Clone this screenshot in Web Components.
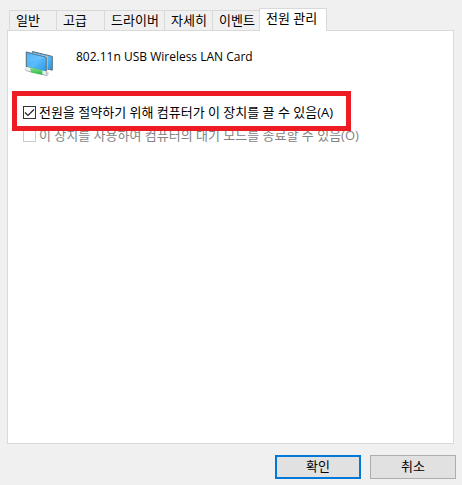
<!DOCTYPE html>
<html lang="ko">
<head>
<meta charset="utf-8">
<meta name="viewport" content="width=device-width, initial-scale=1">
<title>802.11n USB Wireless LAN Card</title>
<style>
body {
	margin: 0;
	background: #f0f0f0;
	color: #000;
	font: 13px/16px "Open Sans", "Noto Sans CJK KR", sans-serif;
}
</style>
</head>
<body>
<property-sheet>
	<sheet-tab slot="tabs" style="flex-basis: 47px">일반</sheet-tab>
	<sheet-tab slot="tabs" style="flex-basis: 48px">고급</sheet-tab>
	<sheet-tab slot="tabs" style="flex-basis: 60px">드라이버</sheet-tab>
	<sheet-tab slot="tabs" style="flex-basis: 48px">자세히</sheet-tab>
	<sheet-tab slot="tabs" style="flex-basis: 47px">이벤트</sheet-tab>
	<sheet-tab slot="tabs" style="flex-basis: 68px" selected>전원 관리</sheet-tab>
	<device-header>802.11n USB Wireless LAN Card</device-header>
	<check-option checked highlight>전원을 절약하기 위해 컴퓨터가 이 장치를 끌 수 있음(A)</check-option>
	<check-option disabled>이 장치를 사용하여 컴퓨터의 대기 모드를 종료할 수 있음(O)</check-option>
	<dialog-button slot="actions" primary>확인</dialog-button>
	<dialog-button slot="actions">취소</dialog-button>
</property-sheet>

<script>
class PropertySheet extends HTMLElement {
	constructor() {
		super()
		this.attachShadow({ mode: 'open' })
		this.shadowRoot.innerHTML = `
		<style>
		:host {
			display: flex;
			flex-direction: column;
			box-sizing: border-box;
			min-height: 100vh;
			padding: 8px 8px 6px 7px;
		}
		.tabs {
			display: flex;
			align-items: flex-end;
			padding-left: 2px;
		}
		.page {
			flex: 1;
			display: flex;
			flex-direction: column;
			border: 1px solid #d9d9d9;
			background: #fff;
			padding: 16px 15px;
		}
		.actions {
			display: flex;
			justify-content: flex-end;
			gap: 9px;
			margin-right: -2px;
			padding-top: 11px;
		}
		</style>
		<div class="tabs" role="tablist"><slot name="tabs"></slot></div>
		<main class="page"><slot></slot></main>
		<footer class="actions"><slot name="actions"></slot></footer>
		`
		this.shadowRoot.addEventListener('click', event => {
			const tab = event.target.closest('sheet-tab')
			if(!tab) {
				return
			}
			for(const item of this.querySelectorAll('sheet-tab')) {
				item.toggleAttribute('selected', item === tab)
			}
		})
	}
}

class SheetTab extends HTMLElement {
	static get observedAttributes() { return [ 'selected' ] }
	constructor() {
		super()
		this.attachShadow({ mode: 'open' })
		this.shadowRoot.innerHTML = `
		<style>
		:host {
			display: block;
			flex: 0 1 auto;
			min-width: 0;
		}
		button {
			display: block;
			box-sizing: border-box;
			width: 100%;
			height: 20px;
			padding: 0 0 2px 6px;
			border: solid #d9d9d9;
			border-width: 1px 0 0 1px;
			background: #f0f0f0;
			color: inherit;
			font: inherit;
			text-align: left;
			white-space: nowrap;
		}
		:host([selected]) button {
			position: relative;
			height: 23px;
			margin-bottom: -1px;
			padding-bottom: 4px;
			border-width: 1px 1px 0;
			background: #fff;
		}
		</style>
		<button type="button" role="tab"><slot></slot></button>
		`
	}
	connectedCallback() {
		this._refresh()
	}
	attributeChangedCallback() {
		this._refresh()
	}
	_refresh() {
		this.shadowRoot.querySelector('button').setAttribute('aria-selected', this.hasAttribute('selected'))
	}
}

class DeviceHeader extends HTMLElement {
	constructor() {
		super()
		this.attachShadow({ mode: 'open' })
		this.shadowRoot.innerHTML = `
		<style>
		:host {
			display: flex;
			align-items: flex-start;
			gap: 21px;
			margin-bottom: 25px;
			font-size: 12px;
			line-height: 20px;
		}
		svg {
			flex: none;
		}
		</style>
		<svg width="32" height="32" viewBox="0 0 32 32" aria-hidden="true">
			<defs>
				<linearGradient id="screen" x1="0" y1="0" x2="1" y2="1">
					<stop offset="0" stop-color="#36a4f2"/>
					<stop offset=".5" stop-color="#5bbcfb"/>
					<stop offset="1" stop-color="#2496ea"/>
				</linearGradient>
				<linearGradient id="plug" x1="0" y1="0" x2="0" y2="1">
					<stop offset="0" stop-color="#86e68a"/>
					<stop offset="1" stop-color="#27b445"/>
				</linearGradient>
			</defs>
			<path d="M9.4 4.5 29.3 9.4v13.8L9.4 18.5z" fill="url(#screen)" stroke="#5b707c"/>
			<path d="M2.5 4 24.4 9.5v16.4L2.5 20.5z" fill="#dfe7ec"/>
			<path d="M3.3 5 23.3 10.2v14.6L3.3 19.8z" fill="url(#screen)" stroke="#5b707c"/>
			<path d="M4.2 6.2 22.4 11 4.2 15.5z" fill="#8fd2ff" opacity=".3"/>
			<path d="m4.5 22.2 4 1.1M20 25.8l3.3.9" stroke="#a9b0b4" stroke-width="4.4" stroke-linecap="round"/>
			<path d="m4.5 21.8 4 1.1M20 25.3l3.3.9" stroke="#eef0f1" stroke-width="3.4" stroke-linecap="round"/>
			<path d="M7.5 20.4 19.4 23.2v4.8L9 25.8q-2-.6-1.5-5.4z" fill="url(#plug)"/>
			<circle cx="23.6" cy="26.2" r="1.1" fill="#b9c0c3"/>
		</svg>
		<slot></slot>
		`
	}
}

class CheckOption extends HTMLElement {
	constructor() {
		super()
		this.attachShadow({ mode: 'open' })
		this.shadowRoot.innerHTML = `
		<style>
		:host {
			display: block;
			position: relative;
			width: fit-content;
			margin-bottom: 7px;
		}
		:host([disabled]) {
			color: #838383;
		}
		/* Red marker frame, lies over the neighbouring rows */
		:host([highlight])::after {
			content: '';
			position: absolute;
			z-index: 1;
			inset: -13px -18px -11px -11px;
			border: 5px solid #ed1c24;
			pointer-events: none;
		}
		label {
			display: flex;
			align-items: center;
			gap: 3px;
		}
		input {
			flex: none;
			appearance: none;
			box-sizing: border-box;
			width: 13px;
			height: 13px;
			margin: 0;
			border: 1px solid #333;
			background: #fff;
		}
		input:checked {
			background: #fff url("data:image/svg+xml,%3Csvg xmlns='http://www.w3.org/2000/svg' viewBox='0 0 11 11'%3E%3Cpath d='M1 5.5 4 8.5 10 2.5' fill='none' stroke='%23222' stroke-width='1.2'/%3E%3C/svg%3E");
		}
		input:disabled {
			border-color: #ccc;
		}
		</style>
		<label for="box"><input type="checkbox" id="box"><span><slot></slot></span></label>
		`
	}
	connectedCallback() {
		const box = this.shadowRoot.getElementById('box')
		box.checked = this.hasAttribute('checked')
		box.disabled = this.hasAttribute('disabled')
	}
}

class DialogButton extends HTMLElement {
	constructor() {
		super()
		this.attachShadow({ mode: 'open' })
		this.shadowRoot.innerHTML = `
		<style>
		:host {
			display: block;
		}
		button {
			display: block;
			box-sizing: border-box;
			width: 86px;
			height: 24px;
			padding: 0 0 2px;
			border: 1px solid #adadad;
			background: #e1e1e1;
			color: inherit;
			font: inherit;
		}
		:host([primary]) button {
			border: 2px solid #0078d7;
		}
		</style>
		<button type="button"><slot></slot></button>
		`
	}
}

customElements.define('property-sheet', PropertySheet)
customElements.define('sheet-tab', SheetTab)
customElements.define('device-header', DeviceHeader)
customElements.define('check-option', CheckOption)
customElements.define('dialog-button', DialogButton)
</script>
</body>
</html>
